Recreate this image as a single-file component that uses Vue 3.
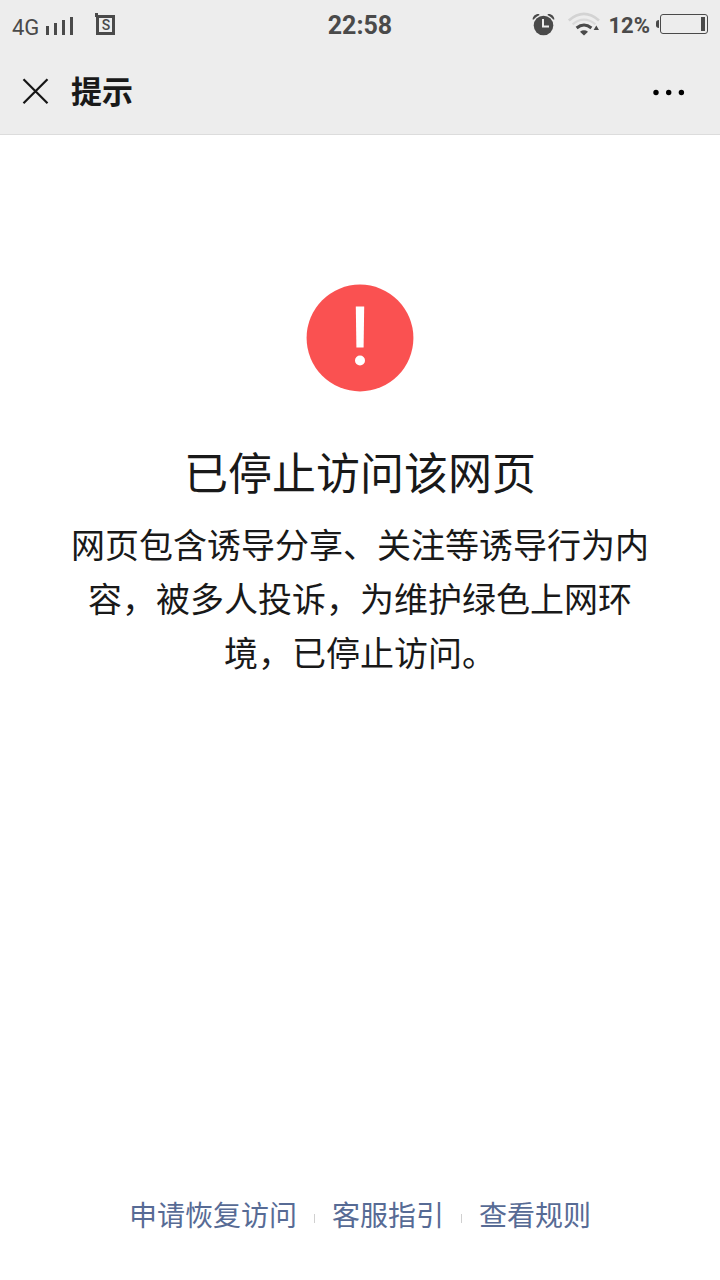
<template>
  <div class="page">
    <header class="top">
      <div class="status">
        <div class="status-left">
          <span class="network">4G</span>
          <svg class="signal" width="28" height="22" viewBox="0 0 28 22" fill="#4a4a4a">
            <path d="M0 12h3v9H0zM8 9h3v12H8zM16 6h3v15h-3zM24 3h3v18h-3z" />
          </svg>
          <svg width="20" height="22" viewBox="0 0 20 22" fill="none">
            <path d="M2.5 2.5h16v17h-16z" stroke="#4a4a4a" stroke-width="3" />
            <path d="M0 -1h3v4H0z" fill="#4a4a4a" />
            <text class="badge-letter" x="11" y="16" text-anchor="middle">S</text>
          </svg>
        </div>
        <time class="clock">22:58</time>
        <div class="status-right">
          <svg width="22" height="22" viewBox="0 0 22 22" fill="#4a4a4a">
            <circle cx="11.5" cy="11.5" r="9.8" />
            <path d="M.6 5.6C.8 2.2 3.6 -.4 7.4 .2L7.2 1.3C5.5 2 3 3.8 1.8 5.6zM22.4 5.6C22.2 2.2 19.4 -.4 15.6 .2L15.8 1.3C17.5 2 20 3.8 21.2 5.6z" />
            <path d="M11 5v7.5h6" fill="none" stroke="#ededed" stroke-width="2" />
          </svg>
          <svg class="wifi" width="32" height="24" viewBox="0 0 32 24" fill="none">
            <path d="M.8 7.4Q16 -5.5 31 7.4" stroke="#d3d3d3" stroke-width="2.6" />
            <path d="M4.6 11.4Q16 2 27.4 11.4" stroke="#dadada" stroke-width="2.2" />
            <path d="M8.6 15Q16 9 23.4 15" stroke="#4a4a4a" stroke-width="3" />
            <path d="M12 18.7Q16 16 20 18.7L16 22.5z" fill="#4a4a4a" />
            <path d="M25.6 17l2.7-4.5 2.7 4.5z" fill="#4a4a4a" />
          </svg>
          <span class="percent">12%</span>
          <svg class="battery" width="52" height="22" viewBox="0 0 52 22" fill="none">
            <path d="M3 6v8C1 14 0 13 0 11.5v-3C0 7 1 6 3 6z" fill="#4a4a4a" />
            <rect x="4.5" y=".5" width="47" height="19" rx="2.5" stroke="#4a4a4a" />
            <path d="M45 3h4v14h-4z" fill="#4a4a4a" />
          </svg>
        </div>
      </div>
      <nav class="nav">
        <button class="icon-btn" type="button" aria-label="关闭">
          <svg width="26" height="26" viewBox="0 0 26 26" stroke="#151515" stroke-width="2.2">
            <path d="M.5 .3l24 24M24.5 .3l-24 24" />
          </svg>
        </button>
        <h1 class="nav-title">提示</h1>
        <button class="icon-btn" type="button" aria-label="更多">
          <svg width="32" height="8" viewBox="0 0 32 8" fill="#000">
            <circle cx="3" cy="4.5" r="2.7" />
            <circle cx="15.7" cy="4.5" r="2.7" />
            <circle cx="28.4" cy="4.5" r="2.7" />
          </svg>
        </button>
      </nav>
    </header>

    <main class="content">
      <svg width="108" height="108" viewBox="0 0 108 108">
        <circle cx="54" cy="54" r="53.4" fill="#fa5151" />
        <path d="M49.8 22.5h8.4l-.6 41h-7.2z" fill="#fff" />
        <circle cx="54" cy="76.5" r="5" fill="#fff" />
      </svg>
      <h2 class="title">已停止访问该网页</h2>
      <p class="desc">网页包含诱导分享、关注等诱导行为内容，被多人投诉，为维护绿色上网环境，已停止访问。</p>
    </main>

    <footer class="links">
      <a v-for="link in links" :key="link" class="link" href="#">{{ link }}</a>
    </footer>
  </div>
</template>

<script setup>
const links = ['申请恢复访问', '客服指引', '查看规则'];
</script>

<style>
body {
  margin: 0;
  background: #fff;
}
</style>

<style scoped>
.page {
  display: flex;
  flex-direction: column;
  min-height: 100vh;
  color: #191919;
  font-family: Roboto, "Noto Sans CJK SC", sans-serif;
}
.page svg {
  display: block;
  flex: none;
  overflow: visible;
}
.top {
  background: #ededed;
  border-bottom: 1px solid #dcdcdc;
}
.status {
  display: grid;
  grid-template-columns: 1fr auto 1fr;
  align-items: center;
  height: 50px;
  padding: 0 12px;
  color: #4a4a4a;
}
.status-left,
.status-right {
  display: flex;
  align-items: center;
}
.status-right {
  justify-content: flex-end;
}
.network {
  padding-top: 6px;
  font-size: 22px;
  line-height: 24px;
}
.signal {
  margin: 0 21px 0 7px;
}
.badge-letter {
  fill: #4a4a4a;
  font-size: 14px;
  font-weight: 500;
}
.clock {
  padding-top: 2px;
  font-size: 25px;
  font-weight: 700;
  line-height: 30px;
}
.wifi {
  margin: 0 8px 0 14px;
}
.percent {
  padding-top: 2px;
  font-size: 22px;
  font-weight: 700;
  line-height: 24px;
}
.battery {
  margin-left: 6px;
}
.nav {
  display: flex;
  align-items: center;
  height: 84px;
  padding: 0 35px 0 23px;
}
.icon-btn {
  padding: 0;
  border: none;
  background: none;
  cursor: pointer;
}
.nav-title {
  flex: 1;
  margin: 0 0 0 22px;
  padding-top: 2px;
  font-size: 31px;
  font-weight: 700;
  line-height: 40px;
}
.content {
  display: flex;
  flex: 1;
  flex-direction: column;
  align-items: center;
  padding: 149px 64px 48px;
  text-align: center;
}
.title {
  margin: 51px 0 0;
  font-size: 44px;
  font-weight: 400;
  line-height: 64px;
}
.desc {
  margin: 12px 0 0;
  font-size: 34px;
  line-height: 54px;
}
.links {
  display: flex;
  justify-content: center;
  padding-bottom: 43px;
}
.link {
  display: flex;
  align-items: center;
  color: #576b95;
  font-size: 28px;
  line-height: 40px;
  text-decoration: none;
}
.link + .link::before {
  content: "";
  width: 1px;
  height: 9px;
  margin: 2px 17px 0;
  background: #d0d0d0;
}
</style>
